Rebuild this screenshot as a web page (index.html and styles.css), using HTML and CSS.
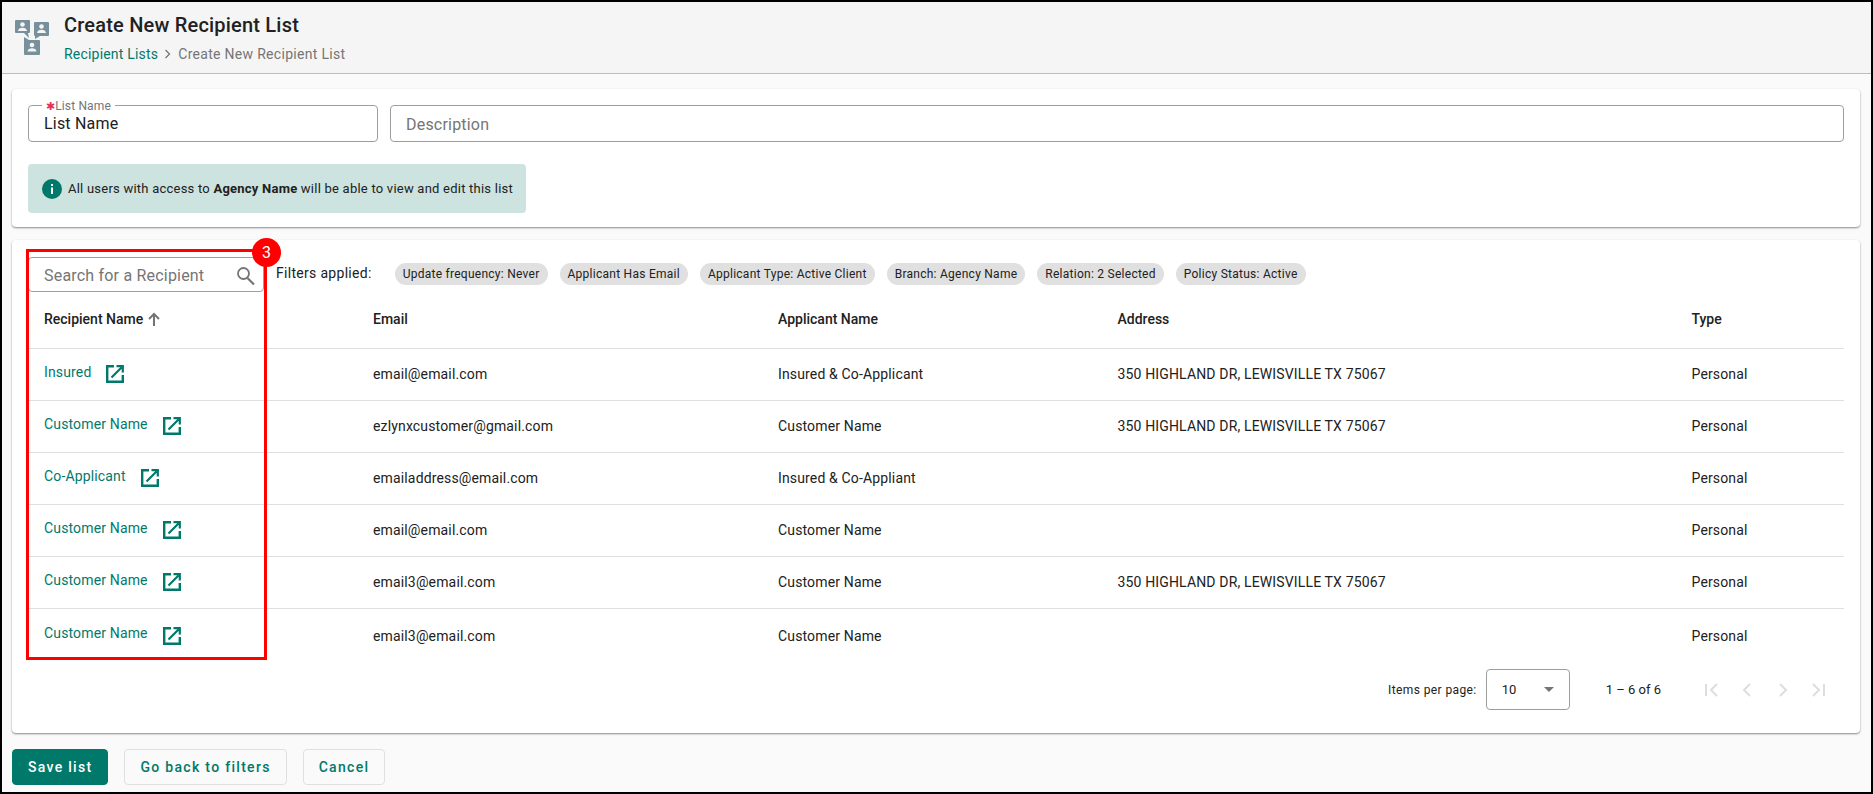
FILE: index.html
```html
<!DOCTYPE html>
<html lang="en">
<head>
  <meta charset="UTF-8">
  <title>Create New Recipient List</title>
  <link rel="stylesheet" href="styles.css">
</head>
<body>
  <svg class="defs" width="0" height="0">
    <symbol id="open" viewBox="0 0 18 18">
      <path d="M8 1.200H1.200v15.600h15.600V10" fill="none" stroke="#00796b" stroke-width="2.400"/>
      <path d="M5.500 12.500 15.500 2.500M10.500 1.200h6.300v6.300" fill="none" stroke="#00796b" stroke-width="2.200"/>
    </symbol>
  </svg>
  <div class="page">
    <header class="top">
      <svg class="top-icon" width="34" height="36" viewBox="0 0 34 36">
        <path fill="#78909c" d="M1 0h13a1 1 0 0 1 1 1v11a1 1 0 0 1-1 1h-1l1 5-5-5H1a1 1 0 0 1-1-1V1a1 1 0 0 1 1-1z"/>
        <path fill="#78909c" d="M20 2h13a1 1 0 0 1 1 1v12a1 1 0 0 1-1 1H25l-5 3 0-3a1 1 0 0 1-1-1V3a1 1 0 0 1 1-1z"/>
        <path fill="#78909c" d="M9 17l5 3h10a1 1 0 0 1 1 1v13a1 1 0 0 1-1 1H10a1 1 0 0 1-1-1z"/>
        <g fill="#f5f5f5">
          <circle cx="7.500" cy="4.500" r="2.300"/><path d="M3 11c0-4.500 9-4.500 9 0z"/>
          <circle cx="26.500" cy="6.500" r="2.300"/><path d="M22 13c0-4.500 9-4.500 9 0z"/>
          <circle cx="17" cy="25" r="2.300"/><path d="M12.500 31.500c0-4.500 9-4.500 9 0z"/>
        </g>
      </svg>
      <div>
        <h1>Create New Recipient List</h1>
        <div class="crumbs">
          <a href="#">Recipient Lists</a>
          <svg width="8" height="10" viewBox="0 0 8 10"><path d="M1.500 1l4 4-4 4" fill="none" stroke="#757575" stroke-width="1.300"/></svg>
          <span>Create New Recipient List</span>
        </div>
      </div>
    </header>

    <main class="content">
      <section class="card form-card">
        <div class="fields">
          <div class="field name-field">
            <label><i>✱</i>List Name</label>
            <span>List Name</span>
          </div>
          <div class="field desc-field"><span class="hint">Description</span></div>
        </div>
        <div class="notice">
          <svg width="20" height="20" viewBox="0 0 20 20">
            <circle cx="10" cy="10" r="10" fill="#00796b"/>
            <path d="M9 8.500h2V15H9zM9 5h2v2H9z" fill="#fff"/>
          </svg>
          <span>All users with access to <b>Agency Name</b> will be able to view and edit this list</span>
        </div>
      </section>

      <section class="card table-card">
        <div class="toolbar">
          <div class="search">
            <span class="hint">Search for a Recipient</span>
            <svg width="22" height="22" viewBox="0 0 22 22"><circle cx="9.500" cy="8.500" r="5.500" fill="none" stroke="#757575" stroke-width="1.800"/><path d="M13.500 13l6.500 6.500" stroke="#757575" stroke-width="2.200"/></svg>
          </div>
          <span class="filters-label">Filters applied:</span>
          <div class="chips">
            <span>Update frequency: Never</span>
            <span>Applicant Has Email</span>
            <span>Applicant Type: Active Client</span>
            <span>Branch: Agency Name</span>
            <span>Relation: 2 Selected</span>
            <span>Policy Status: Active</span>
          </div>
        </div>

        <div class="row head">
          <div class="sort">Recipient Name
            <svg width="12" height="14" viewBox="0 0 12 14"><path d="M6 14V2M1 7l5-5 5 5" fill="none" stroke="#757575" stroke-width="2"/></svg>
          </div>
          <div>Email</div><div>Applicant Name</div><div>Address</div><div>Type</div>
        </div>
        <div class="row">
          <div class="name"><a href="#">Insured</a><svg width="18" height="18"><use href="#open"/></svg></div>
          <div>email@email.com</div><div>Insured &amp; Co-Applicant</div><div>350 HIGHLAND DR, LEWISVILLE TX 75067</div><div>Personal</div>
        </div>
        <div class="row">
          <div class="name"><a href="#">Customer Name</a><svg width="18" height="18"><use href="#open"/></svg></div>
          <div>ezlynxcustomer@gmail.com</div><div>Customer Name</div><div>350 HIGHLAND DR, LEWISVILLE TX 75067</div><div>Personal</div>
        </div>
        <div class="row">
          <div class="name"><a href="#">Co-Applicant</a><svg width="18" height="18"><use href="#open"/></svg></div>
          <div>emailaddress@email.com</div><div>Insured &amp; Co-Appliant</div><div></div><div>Personal</div>
        </div>
        <div class="row">
          <div class="name"><a href="#">Customer Name</a><svg width="18" height="18"><use href="#open"/></svg></div>
          <div>email@email.com</div><div>Customer Name</div><div></div><div>Personal</div>
        </div>
        <div class="row">
          <div class="name"><a href="#">Customer Name</a><svg width="18" height="18"><use href="#open"/></svg></div>
          <div>email3@email.com</div><div>Customer Name</div><div>350 HIGHLAND DR, LEWISVILLE TX 75067</div><div>Personal</div>
        </div>
        <div class="row last">
          <div class="name"><a href="#">Customer Name</a><svg width="18" height="18"><use href="#open"/></svg></div>
          <div>email3@email.com</div><div>Customer Name</div><div></div><div>Personal</div>
        </div>

        <div class="pager">
          <span>Items per page:</span>
          <div class="per-page"><span>10</span><i></i></div>
          <span class="range">1 – 6 of 6</span>
          <div class="pager-icons">
            <svg width="16" height="16" viewBox="0 0 16 16"><path d="M3 2v12M14 2 8 8l6 6" fill="none" stroke="#dedede" stroke-width="2"/></svg>
            <svg width="16" height="16" viewBox="0 0 16 16"><path d="M11 2 5 8l6 6" fill="none" stroke="#dedede" stroke-width="2"/></svg>
            <svg width="16" height="16" viewBox="0 0 16 16"><path d="m5 2 6 6-6 6" fill="none" stroke="#dedede" stroke-width="2"/></svg>
            <svg width="16" height="16" viewBox="0 0 16 16"><path d="M13 2v12M2 2l6 6-6 6" fill="none" stroke="#dedede" stroke-width="2"/></svg>
          </div>
        </div>

        <div class="callout"></div>
        <div class="callout-badge">3</div>
      </section>

      <div class="actions">
        <button class="primary">Save list</button>
        <button>Go back to filters</button>
        <button>Cancel</button>
      </div>
    </main>
  </div>
</body>
</html>
```

FILE: styles.css
```css
* { box-sizing: border-box; }
html, body { margin: 0; }
body { font-family: Roboto, "Liberation Sans", sans-serif; font-size: 14px; letter-spacing: .15px; color: #212121; }
a { color: #00796b; text-decoration: none; }
.defs { position: absolute; }

.page { height: 794px; border: 2px solid #000; background: #fafafa; overflow: hidden; }

.top { height: 72px; display: flex; padding: 18px 0 0 13px; gap: 15px; background: #f5f5f5; border-bottom: 1px solid #bdbdbd; }
.top h1 { margin: -8px 0 0; font-size: 20px; line-height: 26px; font-weight: 500; letter-spacing: .2px; color: #212121; }
.crumbs { margin-top: 7px; display: flex; align-items: center; gap: 6px; font-size: 14px; line-height: 18px; letter-spacing: .3px; color: #757575; }
.crumbs a { letter-spacing: .2px; }

.content { padding: 15px 11px 0 10px; }
.card { background: #fff; border-radius: 4px; box-shadow: 0 1px 2px rgba(0,0,0,.45); }

.form-card { height: 138px; padding: 16px 16px 0; margin-bottom: 13px; }
.fields { display: flex; gap: 12px; }
.field { height: 37px; border: 1px solid #9e9e9e; border-radius: 4px; padding: 0 15px; position: relative; font-size: 16px; letter-spacing: .2px; }
.name-field { width: 350px; line-height: 35px; }
.desc-field { flex: 1; line-height: 37px; }
.field label { position: absolute; left: 13px; top: -7px; padding: 0 4px; background: #fff; font-size: 12px; line-height: 14px; letter-spacing: .15px; color: #757575; }
.field label i { color: #e53157; font-style: normal; font-size: 11px; }
.hint { color: #757575; letter-spacing: .2px; }

.notice { margin-top: 22px; width: 498px; height: 49px; display: flex; align-items: center; gap: 6px; padding-left: 14px; background: #cce3df; border-radius: 4px; font-size: 13px; letter-spacing: .23px; }

.table-card { height: 493px; position: relative; padding: 17px 16px 0; }
.toolbar { display: flex; align-items: flex-start; }
.search { width: 236px; height: 35px; padding: 2px 7px 0 15px; border: 1px solid #9e9e9e; border-radius: 4px; display: flex; align-items: center; justify-content: space-between; font-size: 16px; }
.filters-label { margin: 6px 0 0 12px; font-size: 14px; line-height: 20px; letter-spacing: .3px; }
.chips { display: flex; gap: 12px; margin: 6px 0 0 23px; }
.chips span { height: 22px; line-height: 22px; padding: 0 8px; border-radius: 11px; background: #e0e0e0; font-size: 12px; letter-spacing: .26px; }

.row { display: grid; grid-template-columns: 329px 405px 339.500px 574px 1fr; height: 52px; align-items: center; padding: 0 0 1px 16px; border-bottom: 1px solid #e0e0e0; }
.head { height: 57px; font-weight: 500; font-size: 14px; letter-spacing: 0; padding-bottom: 2px; }
.sort { display: flex; align-items: center; gap: 5px; }
.row.last { border-bottom: 0; padding: 2px 0 0 16px; }
.name { display: flex; align-items: center; gap: 15px; }
.name a { margin-top: -4px; }
.last .name a { margin-top: -6px; }

.pager { display: flex; align-items: center; margin-top: 8px; padding-left: 1360px; font-size: 12px; letter-spacing: .4px; }
.per-page { margin-left: 9px; width: 84px; height: 41px; border: 1px solid #9e9e9e; border-radius: 4px; display: flex; align-items: center; justify-content: space-between; padding: 0 15px; font-size: 13px; letter-spacing: 0; }
.per-page i { border: 5px solid transparent; border-top-color: #757575; border-bottom: 0; }
.range { margin-left: 36px; font-size: 13px; letter-spacing: 0; }
.pager-icons { display: flex; gap: 20px; margin-left: 42px; }

.callout { position: absolute; left: 14px; top: 9px; width: 241px; height: 411px; border: 3px solid #f00; pointer-events: none; }
.callout-badge { position: absolute; left: 240px; top: -2px; width: 29px; height: 29px; border-radius: 50%; background: #f00; color: #fff; font-size: 16px; line-height: 29px; letter-spacing: 0; text-align: center; }

.actions { display: flex; gap: 16px; margin-top: 16px; }
.actions button { height: 36px; padding: 0 15px; border: 1px solid #e0e0e0; border-radius: 4px; background: #fafafa; color: #00796b; font: 500 14px Roboto, sans-serif; letter-spacing: 1.3px; }
.actions .primary { background: #00796b; border-color: #00796b; color: #fff; }
```
